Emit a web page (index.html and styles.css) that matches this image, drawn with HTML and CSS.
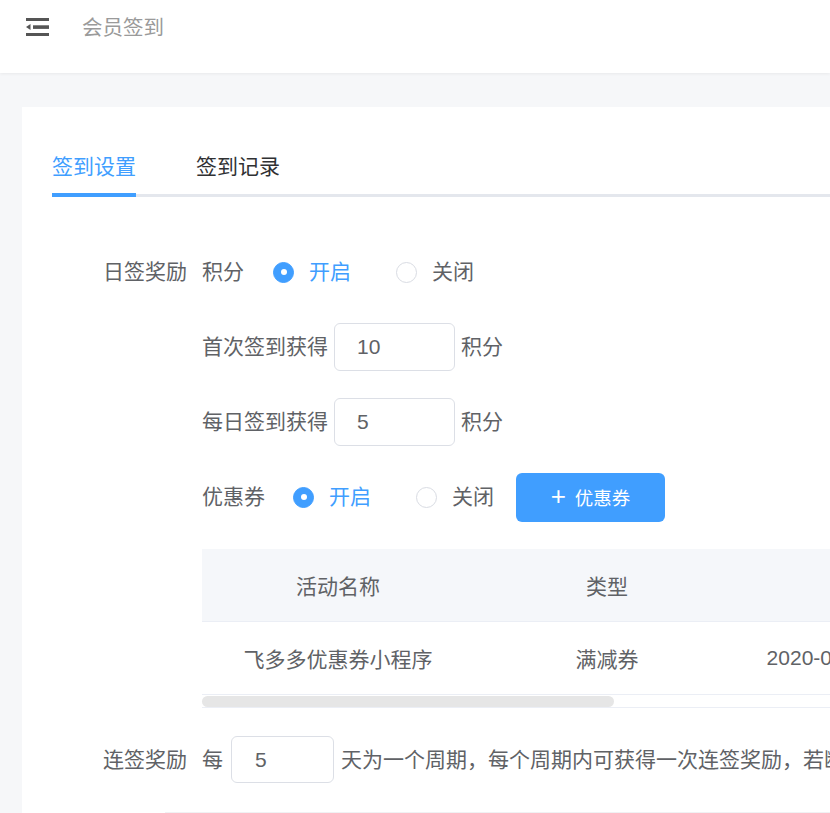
FILE: index.html
```html
<!DOCTYPE html>
<html lang="zh-CN">
<head>
<meta charset="utf-8">
<title>会员签到</title>
<link rel="stylesheet" href="styles.css">
</head>
<body>
<header class="topbar">
  <svg class="menu-icon" width="23" height="18" viewBox="0 0 23 18">
    <rect x="0" y="0" width="23" height="3" fill="#555555"/>
    <polygon points="0,9 4.5,6 4.5,12" fill="#555555"/>
    <rect x="7" y="7.3" width="16" height="3.6" fill="#555555"/>
    <rect x="0" y="15" width="23" height="3.2" fill="#555555"/>
  </svg>
  <span class="page-title">会员签到</span>
</header>
<main class="main">
  <section class="card">
    <nav class="tabs">
      <div class="tab active">签到设置</div>
      <div class="tab">签到记录</div>
    </nav>

    <div class="form">
      <div class="form-item">
        <div class="label">日签奖励</div>
        <div class="content">
          <span class="text">积分</span>
          <div class="radios gap-29">
            <label class="radio checked"><span class="dot"></span><span>开启</span></label>
            <label class="radio"><span class="dot"></span><span>关闭</span></label>
          </div>
        </div>
      </div>

      <div class="form-item">
        <div class="label"></div>
        <div class="content gap-6">
          <span class="text">首次签到获得</span>
          <div class="input">10</div>
          <span class="text">积分</span>
        </div>
      </div>

      <div class="form-item">
        <div class="label"></div>
        <div class="content gap-6">
          <span class="text">每日签到获得</span>
          <div class="input">5</div>
          <span class="text">积分</span>
        </div>
      </div>

      <div class="form-item">
        <div class="label"></div>
        <div class="content">
          <span class="text">优惠券</span>
          <div class="radios gap-28">
            <label class="radio checked"><span class="dot"></span><span>开启</span></label>
            <label class="radio"><span class="dot"></span><span>关闭</span></label>
          </div>
          <button class="btn-primary"><span class="plus">+</span>优惠券</button>
        </div>
      </div>

      <div class="table-wrap">
        <div class="table">
          <div class="tr thead">
            <div class="td c1">活动名称</div>
            <div class="td c2">类型</div>
            <div class="td c3">有效期</div>
            <div class="td c4">操作</div>
          </div>
          <div class="tr">
            <div class="td c1">飞多多优惠券小程序</div>
            <div class="td c2">满减券</div>
            <div class="td c3">2020-06-01 ~ 2020-06-30</div>
            <div class="td c4">删除</div>
          </div>
        </div>
        <div class="scrollbar"><div class="thumb"></div></div>
      </div>

      <div class="form-item series">
        <div class="label">连签奖励</div>
        <div class="content">
          <span class="text">每</span>
          <div class="input small">5</div>
          <span class="text">天为一个周期，每个周期内可获得一次连签奖励，若断签则重新计算周期</span>
        </div>
      </div>
      <div class="next-line"></div>
    </div>
  </section>
</main>
</body>
</html>
```

FILE: styles.css
```css
html, body {
  margin: 0;
  padding: 0;
  overflow: hidden;
  width: 830px;
  height: 813px;
}
body {
  background: #f6f7f9;
  font-family: "Liberation Sans", "Noto Sans CJK SC", sans-serif;
  color: #606266;
}
.topbar {
  height: 73px;
  background: #ffffff;
  display: flex;
  align-items: flex-start;
  padding-left: 26px;
  box-sizing: border-box;
  box-shadow: 0 1px 3px rgba(0, 0, 0, 0.06);
  position: relative;
  z-index: 1;
}
.menu-icon {
  display: block;
  margin-top: 18px;
}
.page-title {
  margin-left: 33px;
  margin-top: 17px;
  font-size: 20.5px;
  color: #9a9a9a;
  line-height: 22px;
}
.main {
  padding: 34px 0 0 22px;
}
.card {
  background: #ffffff;
  width: 1400px;
  height: 720px;
  padding: 30px 30px 0;
  box-sizing: border-box;
}
.tabs {
  display: flex;
  gap: 60px;
  height: 60px;
  width: 1340px;
  box-shadow: inset 0 -3px 0 #e4e7ed;
}
.tab {
  height: 60px;
  line-height: 60px;
  font-size: 21px;
  color: #303133;
  box-sizing: border-box;
}
.tab.active {
  color: #409eff;
  box-shadow: inset 0 -4px 0 #409eff;
}
.form {
  padding-top: 51px;
}
.form-item {
  display: flex;
  align-items: center;
  height: 48px;
  margin-bottom: 27px;
}
.label {
  width: 135px;
  padding-right: 15px;
  text-align: right;
  font-size: 21px;
  color: #606266;
  line-height: 48px;
  flex: none;
}
.content {
  display: flex;
  align-items: center;
  font-size: 21px;
  line-height: 48px;
}
.gap-6 { gap: 6px; }
.text {
  white-space: nowrap;
}
.radios {
  display: flex;
  align-items: center;
  gap: 45px;
}
.gap-29 { margin-left: 29px; }
.gap-28 { margin-left: 28px; }
.radio {
  display: flex;
  align-items: center;
  gap: 15px;
  color: #606266;
  font-size: 21px;
}
.radio .dot {
  width: 21px;
  height: 21px;
  border-radius: 50%;
  border: 1.5px solid #d9dce3;
  box-sizing: border-box;
  background: #ffffff;
  display: flex;
  align-items: center;
  justify-content: center;
}
.radio.checked {
  color: #409eff;
}
.radio.checked .dot {
  border-color: #409eff;
  background: #409eff;
}
.radio.checked .dot::after {
  content: "";
  width: 6px;
  height: 6px;
  border-radius: 50%;
  background: #ffffff;
}
.input {
  width: 121px;
  height: 48px;
  border: 1.5px solid #dcdfe6;
  border-radius: 6px;
  box-sizing: border-box;
  padding-left: 22px;
  line-height: 45px;
  font-size: 21px;
  color: #606266;
}
.input.small {
  width: 103px;
  height: 47px;
  margin: 0 7px 0 8px;
  padding-left: 23px;
}
.btn-primary {
  margin-left: 22px;
  width: 149px;
  height: 49px;
  border: none;
  border-radius: 6px;
  background: #409eff;
  color: #ffffff;
  font-family: "Liberation Sans", "Noto Sans CJK SC", sans-serif;
  font-size: 18.5px;
  display: flex;
  align-items: center;
  justify-content: center;
  padding: 0;
}
.plus {
  font-size: 26px;
  font-weight: 300;
  margin-right: 9px;
  line-height: 1;
  margin-top: -3px;
}
.table-wrap {
  margin-left: 150px;
  margin-top: 28px;
  width: 1100px;
}
.table {
  display: flex;
  flex-direction: column;
}
.tr {
  display: flex;
  height: 73px;
  border-bottom: 1.5px solid #ebeef5;
  box-sizing: border-box;
}
.thead {
  background: #f5f7fa;
}
.td {
  display: flex;
  align-items: center;
  justify-content: center;
  font-size: 21px;
  color: #606266;
  white-space: nowrap;
  flex: none;
}
.c1 { width: 272px; }
.c2 { width: 266px; }
.c3 { width: 292px; }
.c4 { width: 270px; }
.scrollbar {
  height: 13px;
  border-bottom: 1px solid #ebeef5;
  display: flex;
  align-items: center;
  box-sizing: border-box;
  padding-top: 1px;
}
.thumb {
  width: 412px;
  height: 11px;
  border-radius: 6px;
  background: #e6e6e6;
}
.form-item.series {
  margin-top: 28px;
  height: 47px;
  margin-bottom: 0;
}
.next-line {
  margin-top: 29px;
  margin-left: 113px;
  width: 1200px;
  border-top: 1px solid #f0f1f3;
}
```
